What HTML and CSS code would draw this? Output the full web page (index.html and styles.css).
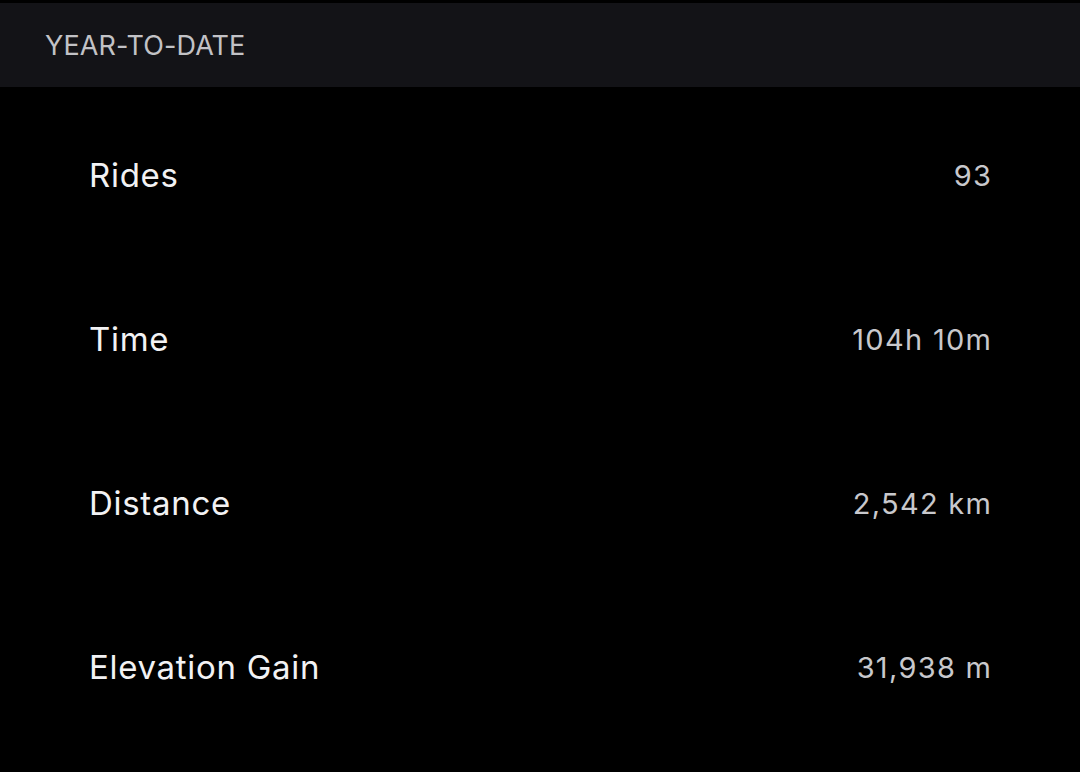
FILE: index.html
```html
<!DOCTYPE html>
<html>
<head>
<meta charset="utf-8">
<link rel="stylesheet" href="styles.css">
</head>
<body>
<div class="page">
  <div class="header"><span class="title">YEAR-TO-DATE</span></div>
  <div class="stats">
    <div class="row"><span class="label">Rides</span><span class="value">93</span></div>
    <div class="row"><span class="label">Time</span><span class="value">104h 10m</span></div>
    <div class="row"><span class="label">Distance</span><span class="value">2,542 km</span></div>
    <div class="row"><span class="label">Elevation Gain</span><span class="value">31,938 m</span></div>
  </div>
</div>
</body>
</html>
```
FILE: styles.css
```css
html, body {
  margin: 0;
  padding: 0;
  background: #000;
}
body {
  font-family: Inter, "Noto Sans", sans-serif;
  width: 1080px;
  height: 772px;
  overflow: hidden;
}
.page {
  padding-top: 3px;
}
.header {
  height: 84px;
  background: #131317;
  display: flex;
  align-items: center;
  padding-left: 45px;
}
.title {
  font-size: 27px;
  color: #c2c2c6;
  letter-spacing: 0.1px;
}
.stats {
  padding: 6px 89px 0 89px;
  display: flex;
  flex-direction: column;
}
.row {
  height: 164px;
  display: flex;
  align-items: center;
  justify-content: space-between;
}
.label {
  font-size: 33px;
  color: #f2f2f4;
  letter-spacing: 0.7px;
}
.value {
  font-size: 29px;
  color: #c8c8cc;
  letter-spacing: 1.3px;
  margin-right: -1.3px;
}
```
